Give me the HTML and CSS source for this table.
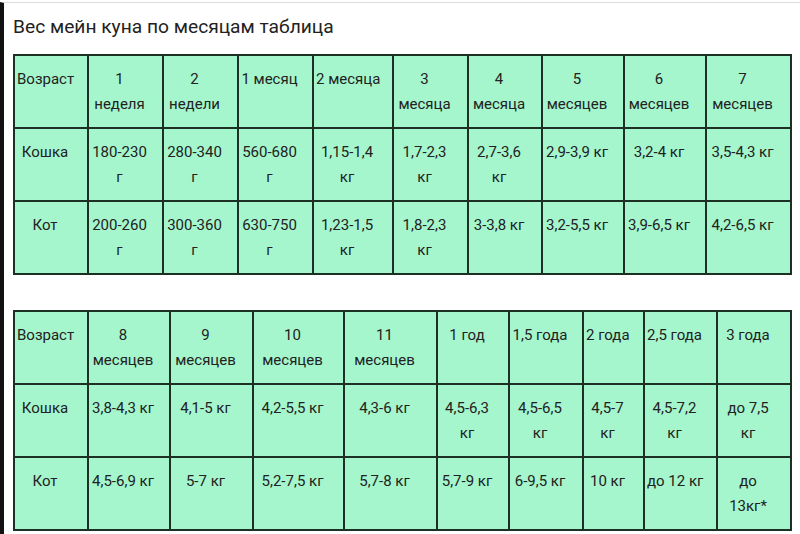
FILE: index.html
```html
<!DOCTYPE html>
<html lang="ru">
<head>
<meta charset="utf-8">
<title>Вес мейн куна по месяцам таблица</title>
<link rel="stylesheet" href="styles.css">
</head>
<body>
<div class="frame">
  <h1 class="title">Вес мейн куна по месяцам таблица</h1>
  <table class="weights">
    <colgroup>
      <col style="width:74px"><col style="width:75px"><col style="width:75px"><col style="width:75px"><col style="width:80px"><col style="width:75px"><col style="width:74px"><col style="width:82px"><col style="width:82px"><col style="width:85px">
    </colgroup>
    <tr>
      <td>Возраст</td><td>1<br>неделя</td><td>2<br>недели</td><td>1 месяц</td><td>2 месяца</td><td>3<br>месяца</td><td>4<br>месяца</td><td>5<br>месяцев</td><td>6<br>месяцев</td><td>7<br>месяцев</td>
    </tr>
    <tr>
      <td>Кошка</td><td>180-230<br>г</td><td>280-340<br>г</td><td>560-680<br>г</td><td>1,15-1,4<br>кг</td><td>1,7-2,3<br>кг</td><td>2,7-3,6<br>кг</td><td>2,9-3,9 кг</td><td>3,2-4 кг</td><td>3,5-4,3 кг</td>
    </tr>
    <tr>
      <td>Кот</td><td>200-260<br>г</td><td>300-360<br>г</td><td>630-750<br>г</td><td>1,23-1,5<br>кг</td><td>1,8-2,3<br>кг</td><td>3-3,8 кг</td><td>3,2-5,5 кг</td><td>3,9-6,5 кг</td><td>4,2-6,5 кг</td>
    </tr>
  </table>
  <table class="weights second">
    <colgroup>
      <col style="width:74px"><col style="width:82px"><col style="width:83px"><col style="width:91px"><col style="width:93px"><col style="width:72px"><col style="width:74px"><col style="width:61px"><col style="width:73px"><col style="width:74px">
    </colgroup>
    <tr>
      <td>Возраст</td><td>8<br>месяцев</td><td>9<br>месяцев</td><td>10<br>месяцев</td><td>11<br>месяцев</td><td>1 год</td><td>1,5 года</td><td>2 года</td><td>2,5 года</td><td>3 года</td>
    </tr>
    <tr>
      <td>Кошка</td><td>3,8-4,3 кг</td><td>4,1-5 кг</td><td>4,2-5,5 кг</td><td>4,3-6 кг</td><td>4,5-6,3<br>кг</td><td>4,5-6,5<br>кг</td><td>4,5-7<br>кг</td><td>4,5-7,2<br>кг</td><td>до 7,5<br>кг</td>
    </tr>
    <tr>
      <td>Кот</td><td>4,5-6,9 кг</td><td>5-7 кг</td><td>5,2-7,5 кг</td><td>5,7-8 кг</td><td>5,7-9 кг</td><td>6-9,5 кг</td><td>10 кг</td><td>до 12 кг</td><td>до<br>13кг*</td>
    </tr>
  </table>
</div>
</body>
</html>
```
FILE: styles.css
```css
html, body {
  margin: 0;
  padding: 0;
  background: #ffffff;
}
body {
  font-family: Roboto, "Noto Sans", "Liberation Sans", sans-serif;
  color: #1f1f1f;
  width: 800px;
  height: 534px;
  overflow: hidden;
}
.frame {
  margin-top: 2px;
  width: 789px;
  height: 540px;
  border-top: 1px solid #dcdcdc;
  border-left: 4px solid #111111;
  border-right: 1px solid #bdbdbd;
  padding-left: 9px;
  box-sizing: content-box;
}
.title {
  margin: 0;
  padding-top: 13px;
  height: 38px;
  font-size: 19.2px;
  font-weight: 400;
  line-height: 22px;
  color: #222222;
}
.weights {
  border-collapse: collapse;
  table-layout: fixed;
  width: 777px;
  background: #a5f6cd;
  font-size: 15px;
  line-height: 25px;
}
.weights tr {
  height: 73px;
}
.weights td {
  border: 2px solid #1c3024;
  padding: 11px 14px 0 2px;
  vertical-align: top;
  text-align: center;
  white-space: nowrap;
  color: #222222;
}
.second {
  margin-top: 35px;
}
```
